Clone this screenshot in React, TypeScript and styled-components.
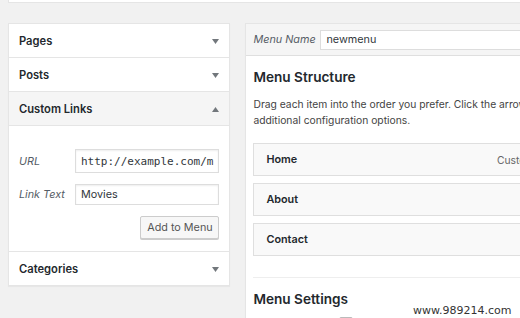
import { FC } from 'react'
import styled, { createGlobalStyle } from 'styled-components'

const GlobalStyle = createGlobalStyle`
  body {
    margin: 0;
    background: #f1f1f1;
    font-family: Inter, 'Liberation Sans', sans-serif;
    color: #23282d;
  }
`

const SECTIONS_TOP = ['Pages', 'Posts']
const MENU_ITEMS = [
  { name: 'Home', kind: 'Custom Link' },
  { name: 'About', kind: '' },
  { name: 'Contact', kind: '' },
]

const Arrow: FC<{ up?: boolean }> = ({ up }) => (
  <svg width="7" height="5" viewBox="0 0 7 5">
    <path d={up ? 'M0 5 L3.5 0 L7 5 Z' : 'M0 0 L7 0 L3.5 5 Z'} fill="#72777c" />
  </svg>
)

const App: FC = () => {
  return (
    <Page>
      <GlobalStyle />
      <TopStrip />
      <Columns>
        <Accordion>
          {SECTIONS_TOP.map((name) => (
            <SectionHeader key={name}>
              {name}
              <Arrow />
            </SectionHeader>
          ))}
          <SectionHeader open>
            Custom Links
            <Arrow up />
          </SectionHeader>
          <SectionBody>
            <FieldRow>
              <FieldLabel>URL</FieldLabel>
              <TextInput mono tall>http://example.com/m</TextInput>
            </FieldRow>
            <FieldRow>
              <FieldLabel>Link Text</FieldLabel>
              <TextInput>Movies</TextInput>
            </FieldRow>
            <ButtonRow>
              <Button>Add to Menu</Button>
            </ButtonRow>
          </SectionBody>
          <SectionHeader last>
            Categories
            <Arrow />
          </SectionHeader>
        </Accordion>

        <MenuPanel>
          <MenuHeader>
            <NameLabel>Menu Name</NameLabel>
            <NameInput>newmenu</NameInput>
          </MenuHeader>
          <MenuBody>
            <Heading>Menu Structure</Heading>
            <Description>
              Drag each item into the order you prefer. Click the arrow on the right of the item to reveal
              <br />
              additional configuration options.
            </Description>
            <ItemList>
              {MENU_ITEMS.map(({ name, kind }) => (
                <MenuItem key={name}>
                  {name}
                  <ItemKind>{kind}</ItemKind>
                </MenuItem>
              ))}
            </ItemList>
            <Settings>
              <Heading>Menu Settings</Heading>
              <Checkbox />
            </Settings>
          </MenuBody>
        </MenuPanel>
      </Columns>
      <Watermark>www.989214.com</Watermark>
    </Page>
  )
}

export default App

const Page = styled.div`
  position: relative;
  width: 520px;
  height: 318px;
  overflow: hidden;
`
const TopStrip = styled.div`
  margin-left: 8px;
  height: 3px;
  background: #fff;
  border-left: 1px solid #e5e5e5;
  border-bottom: 1px solid #e5e5e5;
  box-sizing: border-box;
`
const Columns = styled.div`
  display: flex;
  align-items: flex-start;
  gap: 15px;
  padding: 20px 0 0 8px;
`
const Accordion = styled.div`
  flex: 0 0 221px;
  box-sizing: border-box;
  background: #fff;
  border: 1px solid #e5e5e5;
  box-shadow: 0 1px 1px rgba(0, 0, 0, 0.04);
`
const SectionHeader = styled.div<{ open?: boolean; last?: boolean }>`
  display: flex;
  align-items: center;
  justify-content: space-between;
  height: 33px;
  padding: 0 10px 0 10px;
  font-size: 11.2px;
  font-weight: 600;
  color: #23282d;
  background: ${({ open }) => (open ? '#f5f5f5' : '#fff')};
  border-bottom: ${({ last }) => (last ? 'none' : '1px solid #e5e5e5')};

  svg {
    margin-top: 1px;
  }
`
const SectionBody = styled.div`
  display: flex;
  flex-direction: column;
  padding: 23px 10px 12px 10px;
  border-bottom: 1px solid #e5e5e5;
`
const FieldRow = styled.div`
  display: flex;
  align-items: center;
  margin-bottom: 11px;
`
const FieldLabel = styled.span`
  flex: 0 0 56px;
  font-size: 10.8px;
  font-style: italic;
  color: #555d66;
  white-space: nowrap;
`
const NameLabel = styled(FieldLabel)`
  flex-basis: 67px;
`
const TextInput = styled.div<{ mono?: boolean; tall?: boolean }>`
  flex: 1;
  box-sizing: border-box;
  height: ${({ tall }) => (tall ? '24px' : '21px')};
  display: flex;
  align-items: center;
  padding: 0 5px;
  border: 1px solid #ddd;
  box-shadow: inset 0 1px 2px rgba(0, 0, 0, 0.07);
  font-family: ${({ mono }) => (mono ? "'DejaVu Sans Mono', monospace" : 'inherit')};
  font-size: ${({ mono }) => (mono ? '11px' : '10.8px')};
  color: #32373c;
  white-space: nowrap;
  overflow: hidden;
`
const ButtonRow = styled.div`
  display: flex;
  justify-content: flex-end;
`
const Button = styled.div`
  box-sizing: border-box;
  height: 23px;
  width: 79px;
  display: flex;
  align-items: center;
  justify-content: center;
  font-size: 10.8px;
  color: #555;
  background: #f7f7f7;
  border: 1px solid #ccc;
  border-radius: 2px;
  box-shadow: 0 1px 0 #ccc;
`
const MenuPanel = styled.div`
  flex: 0 0 320px;
  min-width: 0;
  overflow: hidden;
  background: #fff;
  border: 1px solid #e5e5e5;
  box-shadow: 0 1px 1px rgba(0, 0, 0, 0.04);
`
const MenuHeader = styled.div`
  display: flex;
  align-items: center;
  height: 31px;
  padding: 0 7px;
  background: #f5f5f5;
  border-bottom: 1px solid #dfdfdf;
`
const NameInput = styled.div`
  box-sizing: border-box;
  flex: 1;
  height: 20px;
  display: flex;
  align-items: center;
  padding: 0 5px;
  background: #fff;
  border: 1px solid #ddd;
  border-right: none;
  font-size: 10.8px;
  color: #32373c;
`
const MenuBody = styled.div`
  padding: 12px 0 0 7px;
`
const Heading = styled.div`
  font-size: 13.6px;
  font-weight: 600;
  color: #23282d;
  line-height: 18px;
`
const Description = styled.div`
  margin-top: 10px;
  font-size: 10.3px;
  line-height: 16px;
  color: #444;
  white-space: nowrap;
`
const ItemList = styled.div`
  display: flex;
  flex-direction: column;
  gap: 7px;
  margin-top: 15px;
`
const MenuItem = styled.div`
  box-sizing: border-box;
  display: flex;
  align-items: center;
  justify-content: space-between;
  height: 33px;
  padding: 0 9px 0 12px;
  font-size: 10.8px;
  font-weight: 600;
  color: #23282d;
  background: #f9f9f9;
  border: 1px solid #dfdfdf;
  border-right: none;
`
const ItemKind = styled.span`
  font-weight: 400;
  font-size: 10.3px;
  color: #666;
  white-space: nowrap;
`
const Settings = styled.div`
  position: relative;
  margin-top: 21px;
  padding-top: 12px;
  border-top: 1px solid #eee;
  height: 40px;
`
const Checkbox = styled.div`
  position: absolute;
  left: 86px;
  top: 39px;
  width: 12px;
  height: 12px;
  border: 1px solid #bbb;
  border-radius: 2px;
`
const Watermark = styled.div`
  position: absolute;
  left: 413px;
  top: 304px;
  font-family: 'DejaVu Sans', sans-serif;
  font-size: 11px;
  color: #333;
  text-shadow: 0 0 2px #fff;
`
